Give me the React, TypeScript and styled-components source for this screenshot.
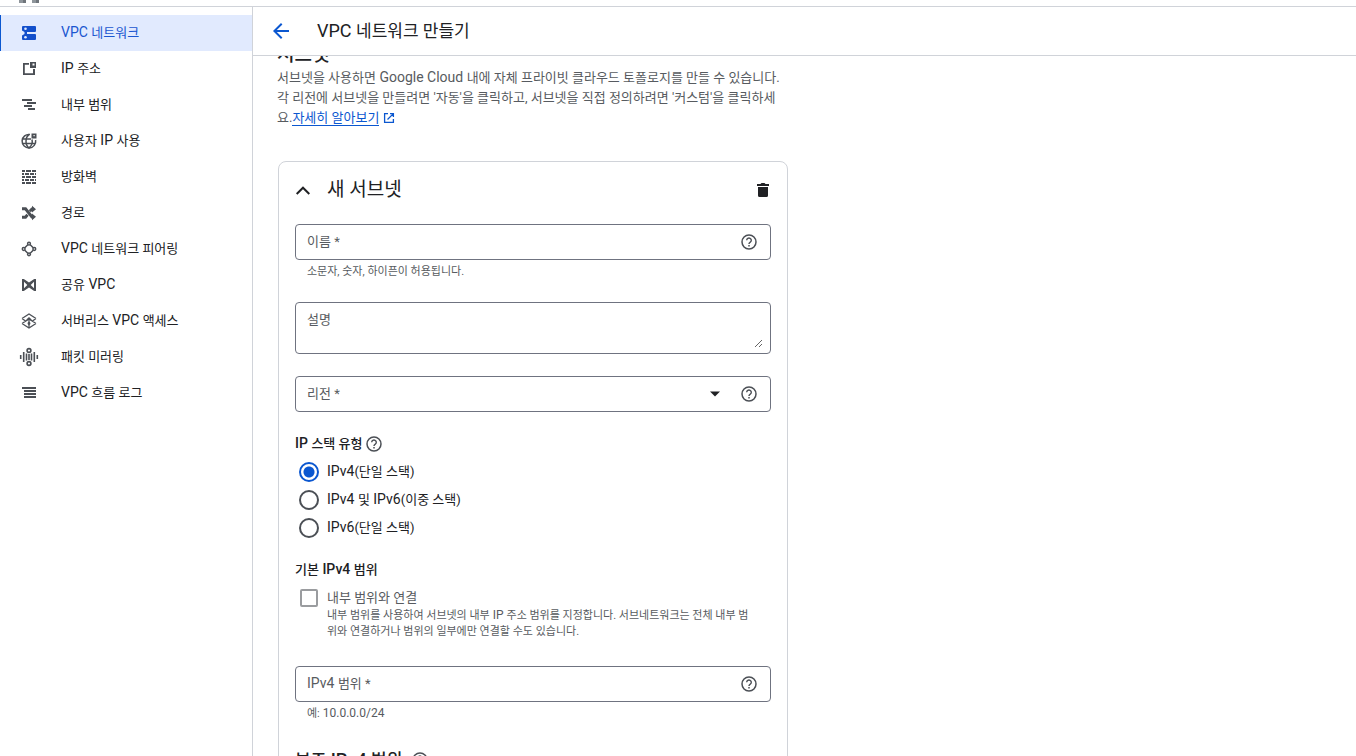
import React, { useState } from 'react';
import styled, { createGlobalStyle } from 'styled-components';

const BLUE = '#0b57d0';
const INK = '#202124';
const GREY = '#575b60';
const LINE = '#d0d3d9';

const GlobalStyle = createGlobalStyle`
  *, *::before, *::after { box-sizing: border-box; }
  body {
    margin: 0;
    background: #fff;
    color: ${INK};
    font-family: Roboto, "Noto Sans CJK KR", sans-serif;
    font-size: 13px;
    line-height: 20px;
    overflow: hidden;
  }
  h1, h2, h3, p, ul { margin: 0; padding: 0; font-weight: 400; }
  button, input, select, textarea { font: inherit; color: inherit; }
`;

/* Latin letters are set one pixel larger than the Hangul beside them. */
const Latin = styled.span`
  font-size: calc(1em + 1px);
  line-height: 0;
`;

const Mixed = ({ text }: { text: string }) => (
  <>
    {text.split(/( ?[A-Za-z0-9][A-Za-z0-9 ./]*)/).map((part, i) =>
      i % 2 ? <Latin key={i}>{part}</Latin> : part,
    )}
  </>
);

const Page = styled.div`
  display: flex;
  flex-direction: column;
  height: 100vh;
  overflow: hidden;
`;

const TopBar = styled.header`
  flex: none;
  display: flex;
  gap: 6px;
  height: 7px;
  padding-left: 19px;
  border-bottom: 1px solid ${LINE};
`;

const MarkBlock = styled.span`
  width: 7px;
  height: 3px;
  background: linear-gradient(90deg, #8f959b 4px, #6f757b 4px);
`;

const Body = styled.div`
  flex: 1;
  display: flex;
  min-height: 0;
`;

const Sidebar = styled.nav`
  flex: none;
  width: 253px;
  padding-top: 8px;
  border-right: 1px solid ${LINE};
`;

const NavList = styled.ul`
  list-style: none;
`;

const NavLink = styled.a<{ $active?: boolean }>`
  display: flex;
  align-items: center;
  gap: 22px;
  height: 36px;
  padding-left: ${p => (p.$active ? 18 : 19)}px;
  border-left: ${p => (p.$active ? `1px solid ${BLUE}` : 'none')};
  background: ${p => (p.$active ? '#e1eafe' : 'transparent')};
  color: ${p => (p.$active ? '#1a56d0' : INK)};
  text-decoration: none;
  svg { color: ${p => (p.$active ? '#124fcb' : '#4b4f55')}; }
`;

const NavIcon = styled.svg`
  flex: none;
  width: 20px;
  height: 20px;
  fill: currentColor;
`;

const Main = styled.main`
  flex: 1;
  display: flex;
  flex-direction: column;
  min-width: 0;
`;

const PageHeader = styled.header`
  flex: none;
  display: flex;
  align-items: center;
  gap: 24px;
  height: 49px;
  padding-left: 16px;
  border-bottom: 1px solid ${LINE};
`;

const IconButton = styled.button`
  display: inline-flex;
  align-items: center;
  justify-content: center;
  width: 24px;
  height: 24px;
  padding: 0;
  border: 0;
  background: none;
  color: ${INK};
  cursor: pointer;
`;

const PageTitle = styled.h1`
  font-size: 17px;
  line-height: 24px;
`;

const Scroller = styled.div`
  flex: 1;
  min-height: 0;
  overflow: hidden;
`;

const Content = styled.div`
  max-width: 560px;
  margin-top: -14px;
  padding: 0 24px;
`;

const SectionTitle = styled.h2`
  font-size: 19px;
  font-weight: 500;
  line-height: 26px;
`;

const Intro = styled.p`
  color: ${GREY};
  white-space: nowrap;
`;

const DocLink = styled.a`
  color: ${BLUE};
  text-decoration: none;
  span { border-bottom: 1px solid ${BLUE}; }
  svg { margin-left: 4px; vertical-align: -2px; }
`;

const Card = styled.section`
  margin: 33px 1px 0;
  padding: 0 16px 24px;
  border: 1px solid ${LINE};
  border-radius: 8px;
`;

const CardHeader = styled.div`
  display: flex;
  align-items: center;
  height: 62px;
  padding: 0 0 6px;
`;

const CollapseButton = styled(IconButton)`
  width: 16px;
  margin-right: 16px;
`;

const CardTitle = styled.h3`
  flex: 1;
  font-size: 19px;
  line-height: 24px;
`;

const DeleteButton = styled(IconButton)`
  width: 16px;
`;

const Field = styled.div<{ $tall?: boolean }>`
  display: grid;
  grid-template-columns: minmax(0, 1fr) auto;
  align-items: ${p => (p.$tall ? 'start' : 'center')};
  height: ${p => (p.$tall ? 52 : 36)}px;
  border: 1px solid #6f7380;
  border-radius: 4px;
`;

const FieldLabel = styled.label`
  grid-area: 1 / 1;
  z-index: 1;
  padding-left: 11px;
  color: ${GREY};
  pointer-events: none;
`;

const TextInput = styled.input`
  grid-area: 1 / 1;
  width: 100%;
  height: 34px;
  padding: 0 11px;
  border: 0;
  outline: 0;
  background: none;
`;

const RegionSelect = styled.select`
  grid-area: 1 / 1;
  width: 100%;
  height: 34px;
  padding: 0 11px;
  border: 0;
  outline: 0;
  appearance: none;
  background: none;
`;

const Caret = styled.svg`
  grid-area: 1 / 1;
  justify-self: end;
  width: 12px;
  height: 6px;
  margin-right: 11px;
  pointer-events: none;
`;

const TextArea = styled.textarea`
  grid-area: 1 / 1 / 2 / 3;
  height: 38px;
  margin: 7px 7px 5px 11px;
  padding: 0;
  border: 0;
  outline: 0;
  background: none;
  resize: vertical;
`;

const AreaLabel = styled(FieldLabel)`
  padding-top: 7px;
`;

const FieldHelp = styled(IconButton)`
  grid-area: 1 / 2;
  width: 18px;
  margin: 0 12px 0 8px;
  color: #4b4f55;
`;

const Hint = styled.p`
  padding: 4px 12px 0;
  color: ${GREY};
  font-size: 11px;
  line-height: 16px;
`;

const Gap = styled.div<{ $wide?: boolean }>`
  margin-top: ${p => (p.$wide ? 26 : 22)}px;
`;

const Group = styled.fieldset<{ $close?: boolean }>`
  min-width: 0;
  margin: ${p => (p.$close ? 18 : 22)}px 0 0;
  padding: 0;
  border: 0;
`;

const GroupTitle = styled.legend`
  display: flex;
  align-items: center;
  gap: 3px;
  padding: 0;
  font-weight: 500;
`;

const InlineHelp = styled(IconButton)`
  width: 18px;
  height: 18px;
  color: #4b4f55;
`;

const Options = styled.div`
  padding-top: 4px;
`;

const Option = styled.label`
  display: flex;
  align-items: center;
  gap: 8px;
  height: 28px;
  padding-left: 4px;
`;

const Radio = styled.input`
  appearance: none;
  flex: none;
  width: 20px;
  height: 20px;
  margin: 0;
  border: 2px solid #4b4f55;
  border-radius: 50%;
  &:checked {
    border-color: ${BLUE};
    background: radial-gradient(circle, ${BLUE} 5px, #fff 6px);
  }
`;

const CheckRow = styled.div`
  display: flex;
  gap: 9px;
  padding: 8px 0 0 5px;
`;

const Checkbox = styled.input`
  appearance: none;
  flex: none;
  width: 18px;
  height: 18px;
  margin: 1px 0 0;
  border: 2px solid #9a9c9f;
  border-radius: 2px;
`;

const CheckText = styled.div`
  min-width: 0;
  color: ${GREY};
  label { display: block; }
  p {
    font-size: 11px;
    line-height: 16px;
    white-space: nowrap;
  }
`;

const SubTitle = styled.h3`
  display: flex;
  align-items: center;
  gap: 9px;
  margin-top: 26px;
  font-size: 17px;
  font-weight: 500;
  line-height: 24px;
`;

const HelpIcon = () => (
  <svg width="18" height="18" viewBox="0 0 18 18" fill="none" stroke="currentColor" aria-hidden="true">
    <circle cx="9" cy="9" r="7" strokeWidth="1.5" />
    <path d="M6.7 7.3a2.3 2.2 0 1 1 3.6 1.8c-.8.6-1.3.9-1.3 1.9" strokeWidth="1.4" />
    <path d="M9 12v1.5" strokeWidth="1.5" />
  </svg>
);

const navItems: { label: string; icon: React.ReactNode }[] = [
  {
    label: 'VPC 네트워크',
    icon: (
      <>
        <path d="M4 3h12a1 1 0 0 1 1 1v4a1 1 0 0 1-1 1H8v2h8a1 1 0 0 1 1 1v4a1 1 0 0 1-1 1H4a1 1 0 0 1-1-1v-3.500L5.500 11V9L3 7.500V4a1 1 0 0 1 1-1z" />
        <circle cx="6.500" cy="5.800" r="1.300" fill="#e1eafe" />
        <circle cx="6.500" cy="14.200" r="1.300" fill="#e1eafe" />
      </>
    ),
  },
  {
    label: 'IP 주소',
    icon: (
      <>
        <path d="M10 4H4v12h12v-6h-2v4.200H5.800V5.800H10z" />
        <path fillRule="evenodd" d="M11 3h6v6h-6zM13.500 4.500v2h2v-2z" />
      </>
    ),
  },
  { label: '내부 범위', icon: <path d="M3 4h10v2H3zM8 7h9v2H8zM5 10h8v2H5zM9 13h7v2H9z" /> },
  {
    label: '사용자 IP 사용',
    icon: (
      <>
        <g fill="none" stroke="currentColor" strokeWidth="1.500">
          <path d="M11 3.500A6.800 6.800 0 1 0 16.600 9M3.500 8H12M3.500 12.500h13" />
          <path d="M10 3.300C6 6.500 6 14 10 16.800C13 14.500 13.600 11 13 8.500" />
        </g>
        <path fillRule="evenodd" d="M12.500 2.500H17.500V7.500H12.500zM14.500 4V5.200H15.700V4z" />
      </>
    ),
  },
  {
    label: '방화벽',
    icon: (
      <path d="M3 3h3v2H3zM7 3h5v2H7zM13 3h4v2h-4zM3 6h2v2H3zM6 6h4v2H6zM11 6h4v2h-4zM16 6h1v2h-1zM3 9h3v2H3zM7 9h5v2H7zM13 9h4v2h-4zM3 12h2v2H3zM6 12h4v2H6zM11 12h4v2h-4zM16 12h1v2h-1zM3 15h3v2H3zM7 15h5v2H7zM13 15h4v2h-4z" />
    ),
  },
  {
    label: '경로',
    icon: (
      <>
        <path d="M3 5.800h3.500L13 14h1.500M3 14.200h3.500L8.500 11.800M10.800 8.200L13 6h1.500" fill="none" stroke="currentColor" strokeWidth="3" />
        <path d="M13 2.800L17 6.200L13 9.600zM13 10.400L17 13.800L13 17.200z" />
      </>
    ),
  },
  {
    label: 'VPC 네트워크 피어링',
    icon: (
      <g fill="none" stroke="currentColor" strokeWidth="1.500">
        <circle cx="10" cy="4.700" r="1.400" />
        <circle cx="10" cy="15.300" r="1.400" />
        <circle cx="4.700" cy="10" r="1.400" />
        <circle cx="15.300" cy="10" r="1.400" />
        <path d="M8.800 5.800L5.800 8.800M11.200 5.800L14.200 8.800M5.800 11.200L8.800 14.200M14.200 11.200L11.200 14.200" />
      </g>
    ),
  },
  {
    label: '공유 VPC',
    icon: (
      <path
        fillRule="evenodd"
        d="M3 4h1.800L10 7.500L15.200 4H17v12h-1.800L10 12.500L4.800 16H3zM5 6.800v6.400L8.300 10zM15 6.800L11.700 10L15 13.200z"
      />
    ),
  },
  {
    label: '서버리스 VPC 액세스',
    icon: (
      <g fill="none" stroke="currentColor" strokeWidth="1.300">
        <path d="M3 7.500L10 3l7 4.500M3 7.500L6.500 10M17 7.500L13.500 10M3 12.500L10 17l7-4.500M3 12.500L10 8l7 4.500" />
        <path d="M10 14.500V7M7.800 9L10 6.800L12.200 9M10 12v4" />
        <circle cx="10" cy="12.500" r=".8" />
      </g>
    ),
  },
  {
    label: '패킷 미러링',
    icon: (
      <g fill="none" stroke="currentColor" strokeWidth="1.600">
        <path d="M1.700 8v4M4.700 5v10M7.500 6.500v7M12.500 6.500v7M15.300 5v10M18.300 8v4M10 7v6" />
        <circle cx="10" cy="3.500" r="1.900" />
        <circle cx="10" cy="16.500" r="1.900" />
      </g>
    ),
  },
  { label: 'VPC 흐름 로그', icon: <path d="M3 4h14v2H3zM5 7h12v2H5zM5 10h12v2H5zM5 13h12v2H5z" /> },
];

const stacks = ['IPv4(단일 스택)', 'IPv4 및 IPv6(이중 스택)', 'IPv6(단일 스택)'];

export default function App() {
  const [stack, setStack] = useState(0);
  return (
    <Page>
      <GlobalStyle />
      <TopBar>
        <MarkBlock />
        <MarkBlock />
      </TopBar>
      <Body>
        <Sidebar>
          <NavList>
            {navItems.map((item, i) => (
              <li key={item.label}>
                <NavLink href="#" $active={i === 0}>
                  <NavIcon viewBox="0 0 20 20" aria-hidden="true">{item.icon}</NavIcon>
                  <span><Mixed text={item.label} /></span>
                </NavLink>
              </li>
            ))}
          </NavList>
        </Sidebar>
        <Main>
          <PageHeader>
            <IconButton aria-label="뒤로">
              <svg width="24" height="24" viewBox="0 0 24 24" fill={BLUE} aria-hidden="true">
                <path d="M20 11H7.830l5.590-5.590L12 4l-8 8 8 8 1.410-1.410L7.830 13H20z" />
              </svg>
            </IconButton>
            <PageTitle><Mixed text="VPC 네트워크 만들기" /></PageTitle>
          </PageHeader>
          <Scroller>
            <Content>
              <SectionTitle>서브넷</SectionTitle>
              <Intro>
                <Mixed text="서브넷을 사용하면 Google Cloud 내에 자체 프라이빗 클라우드 토폴로지를 만들 수 있습니다." />
                <br />
                각 리전에 서브넷을 만들려면 '자동'을 클릭하고, 서브넷을 직접 정의하려면 '커스텀'을 클릭하세
                <br />
                요.
                <DocLink href="#">
                  <span>자세히 알아보기</span>
                  <svg width="12" height="12" viewBox="0 0 12 12" fill="none" stroke="currentColor" strokeWidth="1.300" aria-hidden="true">
                    <path d="M5 1.600H1.600v8.800h8.800V7M7 1.600h3.400V5M10.400 1.600L4.500 7.500" />
                  </svg>
                </DocLink>
              </Intro>
              <Card>
                <CardHeader>
                  <CollapseButton aria-label="접기">
                    <svg width="16" height="16" viewBox="0 0 16 16" fill="none" stroke="currentColor" strokeWidth="2" aria-hidden="true">
                      <path d="M1.700 12L8 5.700l6.300 6.300" />
                    </svg>
                  </CollapseButton>
                  <CardTitle>새 서브넷</CardTitle>
                  <DeleteButton aria-label="삭제">
                    <svg width="16" height="16" viewBox="0 0 16 16" fill="currentColor" aria-hidden="true">
                      <path d="M2 2h3.500l1-1h3l1 1H14v2H2zM3 5h10v8.500a1.500 1.500 0 0 1-1.500 1.500h-7A1.500 1.500 0 0 1 3 13.500z" />
                    </svg>
                  </DeleteButton>
                </CardHeader>
                <Field>
                  <FieldLabel htmlFor="name">이름 *</FieldLabel>
                  <TextInput id="name" />
                  <FieldHelp aria-label="이름 도움말"><HelpIcon /></FieldHelp>
                </Field>
                <Hint>소문자, 숫자, 하이픈이 허용됩니다.</Hint>
                <Gap>
                  <Field $tall>
                    <AreaLabel htmlFor="description">설명</AreaLabel>
                    <TextArea id="description" />
                  </Field>
                </Gap>
                <Gap>
                  <Field>
                    <FieldLabel htmlFor="region">리전 *</FieldLabel>
                    <RegionSelect id="region" defaultValue="">
                      <option value="" />
                    </RegionSelect>
                    <Caret viewBox="0 0 12 6" fill={INK} aria-hidden="true">
                      <path d="M1 0.500h10L6 5.500z" />
                    </Caret>
                    <FieldHelp aria-label="리전 도움말"><HelpIcon /></FieldHelp>
                  </Field>
                </Gap>
                <Group>
                  <GroupTitle>
                    <span><Mixed text="IP 스택 유형" /></span>
                    <InlineHelp aria-label="IP 스택 유형 도움말"><HelpIcon /></InlineHelp>
                  </GroupTitle>
                  <Options>
                    {stacks.map((label, i) => (
                      <Option key={label}>
                        <Radio type="radio" name="stack" checked={stack === i} onChange={() => setStack(i)} />
                        <span><Mixed text={label} /></span>
                      </Option>
                    ))}
                  </Options>
                </Group>
                <Group $close>
                  <GroupTitle><span><Mixed text="기본 IPv4 범위" /></span></GroupTitle>
                  <CheckRow>
                    <Checkbox type="checkbox" id="internal" />
                    <CheckText>
                      <label htmlFor="internal">내부 범위와 연결</label>
                      <p>
                        <Mixed text="내부 범위를 사용하여 서브넷의 내부 IP 주소 범위를 지정합니다. 서브네트워크는 전체 내부 범" />
                        <br />
                        위와 연결하거나 범위의 일부에만 연결할 수도 있습니다.
                      </p>
                    </CheckText>
                  </CheckRow>
                </Group>
                <Gap $wide>
                  <Field>
                    <FieldLabel htmlFor="range"><Mixed text="IPv4 범위 *" /></FieldLabel>
                    <TextInput id="range" />
                    <FieldHelp aria-label="IPv4 범위 도움말"><HelpIcon /></FieldHelp>
                  </Field>
                </Gap>
                <Hint><Mixed text="예: 10.0.0.0/24" /></Hint>
                <SubTitle>
                  <span><Mixed text="보조 IPv4 범위" /></span>
                  <InlineHelp aria-label="보조 IPv4 범위 도움말"><HelpIcon /></InlineHelp>
                </SubTitle>
              </Card>
            </Content>
          </Scroller>
        </Main>
      </Body>
    </Page>
  );
}
